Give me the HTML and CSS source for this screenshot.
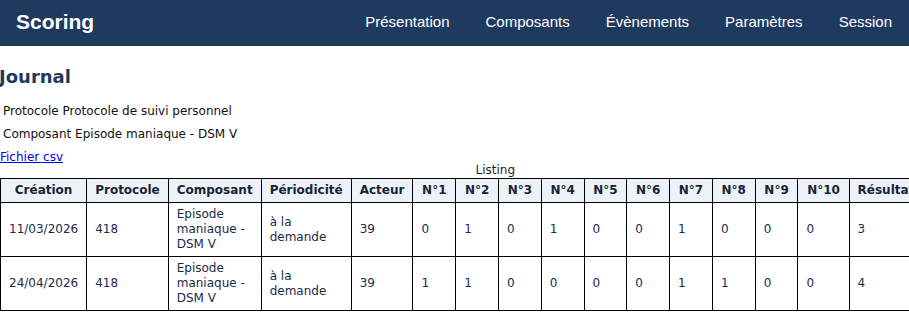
FILE: index.html
```html
<!DOCTYPE html>
<html lang="fr">
<head>
<meta charset="utf-8">
<title>Scoring - Journal</title>
<link rel="stylesheet" href="styles.css">
</head>
<body>
<header class="navbar">
  <span class="brand">Scoring</span>
  <nav class="nav">
    <a href="#">Présentation</a>
    <a href="#">Composants</a>
    <a href="#">Évènements</a>
    <a href="#">Paramètres</a>
    <a href="#">Session</a>
  </nav>
</header>
<main class="content">
  <h1 class="title">Journal</h1>
  <p class="info">Protocole Protocole de suivi personnel</p>
  <p class="info">Composant Episode maniaque - DSM V</p>
  <a class="csv" href="#">Fichier csv</a>
  <table class="listing">
    <caption>Listing</caption>
    <thead>
      <tr>
        <th>Création</th><th>Protocole</th><th>Composant</th><th>Périodicité</th><th>Acteur</th>
        <th class="num">N°1</th><th class="num">N°2</th><th class="num">N°3</th><th class="num">N°4</th><th class="num">N°5</th><th class="num">N°6</th><th class="num">N°7</th><th class="num">N°8</th><th class="num">N°9</th><th class="num">N°10</th>
        <th>Résultat</th><th>Actions</th>
      </tr>
    </thead>
    <tbody>
      <tr>
        <td>11/03/2026</td><td>418</td><td>Episode maniaque - DSM V</td><td>à la demande</td><td>39</td>
        <td>0</td><td>1</td><td>0</td><td>1</td><td>0</td><td>0</td><td>1</td><td>0</td><td>0</td><td>0</td>
        <td>3</td><td></td>
      </tr>
      <tr>
        <td>24/04/2026</td><td>418</td><td>Episode maniaque - DSM V</td><td>à la demande</td><td>39</td>
        <td>1</td><td>1</td><td>0</td><td>0</td><td>0</td><td>0</td><td>1</td><td>1</td><td>0</td><td>0</td>
        <td>4</td><td></td>
      </tr>
    </tbody>
  </table>
</main>
</body>
</html>
```
FILE: styles.css
```css
html, body {
  margin: 0;
  padding: 0;
  background: #ffffff;
}
body {
  font-family: "DejaVu Sans", Verdana, sans-serif;
  font-size: 12px;
  line-height: 15px;
  color: #111111;
}
.navbar {
  height: 46px;
  box-sizing: border-box;
  background: #1f3a5f;
  display: flex;
  align-items: center;
  justify-content: space-between;
  padding: 0 17px 2px 16px;
  font-family: "Liberation Sans", Arial, sans-serif;
  color: #ffffff;
}
.brand {
  font-size: 21px;
  font-weight: bold;
  line-height: 24px;
}
.nav {
  display: flex;
  gap: 36px;
}
.nav a {
  color: #ffffff;
  text-decoration: none;
  font-size: 15px;
  line-height: 18px;
}
.content {
  padding: 0;
}
.title {
  margin: 20px 0 0 -1px;
  font-size: 18px;
  line-height: 22px;
  font-weight: bold;
  color: #1f3a5f;
}
.info {
  margin: 0;
  padding: 4px 3px 4px;
}
.info:first-of-type {
  margin-top: 12px;
}
.csv {
  display: block;
  margin-top: 4px;
  color: #0000ee;
  text-decoration: underline;
}
.listing {
  border-collapse: collapse;
  color: #1c2b45;
}
.listing caption {
  margin-top: -2px;
  line-height: 15px;
  color: #222222;
}
.listing th,
.listing td {
  border: 1px solid #000000;
  padding: 4px 8px;
  line-height: 15px;
  vertical-align: middle;
}
.listing th {
  background: #edf2f9;
  color: #1a2333;
  font-weight: bold;
  text-align: center;
  white-space: nowrap;
}
.listing th.num {
  padding-left: 8.7px;
  padding-right: 8.7px;
}
.listing td {
  text-align: left;
}
```
